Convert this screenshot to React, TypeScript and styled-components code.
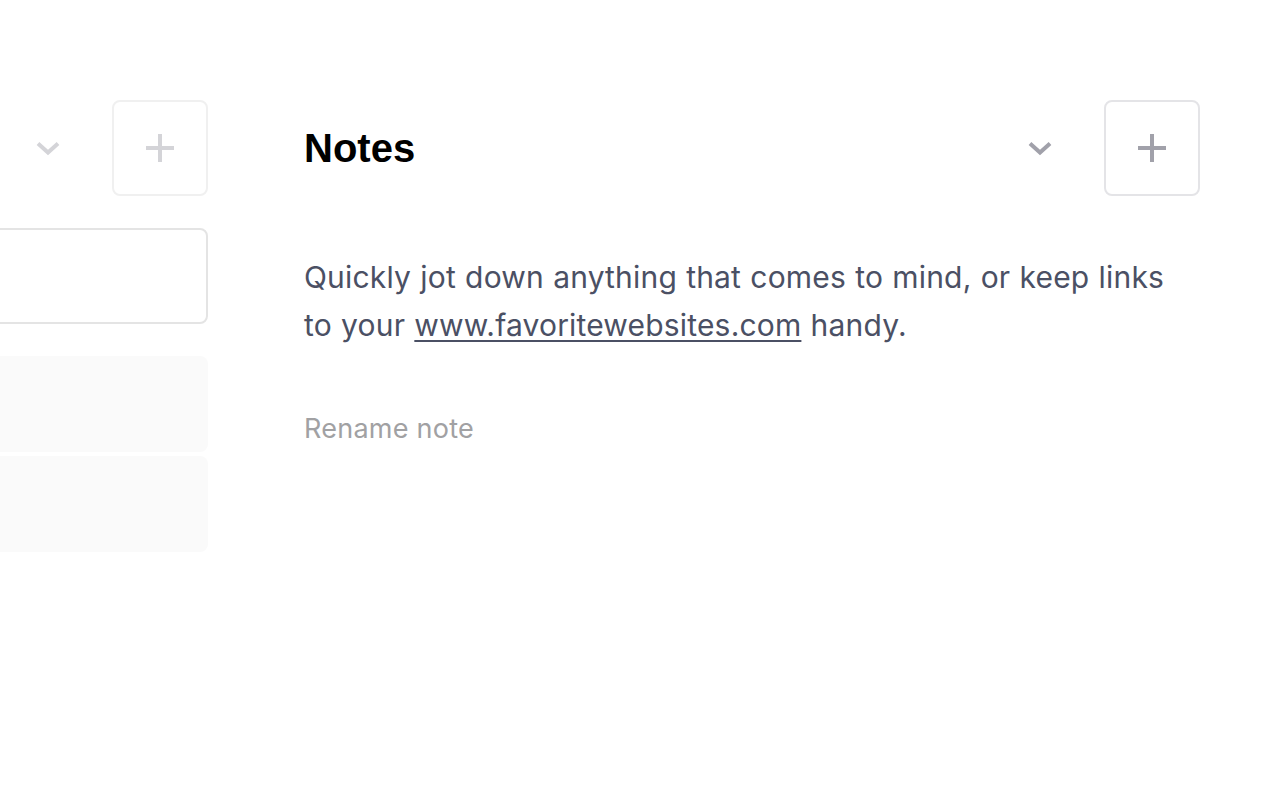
import React from "react";
import styled, { createGlobalStyle } from "styled-components";

const Global = createGlobalStyle`
  html, body { margin: 0; padding: 0; background: #ffffff; }
  body { width: 1280px; height: 800px; overflow: hidden; font-family: Inter, "Noto Sans", sans-serif; }
`;

const Viewport = styled.div`
  width: 1280px;
  height: 800px;
  overflow: hidden;
  padding-top: 100px;
  box-sizing: border-box;
`;

const Track = styled.div<{ $offset: number }>`
  display: flex;
  gap: 96px;
  transform: translateX(${(p) => p.$offset}px);
`;

const Panel = styled.section`
  flex: 0 0 896px;
  width: 896px;
  display: flex;
  flex-direction: column;
`;

const Header = styled.header`
  display: flex;
  align-items: center;
  height: 96px;
`;

const Title = styled.h2`
  flex: 1;
  margin: 0;
  font-family: "Liberation Sans", Arial, sans-serif;
  font-weight: 700;
  font-size: 40px;
  color: #000;
`;

const ChevronButton = styled.button<{ $muted?: boolean }>`
  width: 64px;
  height: 64px;
  border: none;
  background: transparent;
  padding: 0;
  margin-right: 32px;
  display: flex;
  align-items: center;
  justify-content: center;
  color: ${(p) => (p.$muted ? "#d4d4d8" : "#a1a1aa")};
`;

const AddButton = styled.button<{ $muted?: boolean }>`
  width: 96px;
  height: 96px;
  box-sizing: border-box;
  border: 2px solid ${(p) => (p.$muted ? "#f0f0f0" : "#e4e4e7")};
  border-radius: 8px;
  background: #fff;
  padding: 0;
  display: flex;
  align-items: center;
  justify-content: center;
  color: ${(p) => (p.$muted ? "#d4d4d8" : "#a1a1aa")};
`;

const InputBox = styled.div`
  margin-top: 32px;
  height: 96px;
  box-sizing: border-box;
  border: 2px solid #e4e4e4;
  border-radius: 8px;
`;

const RowList = styled.div`
  margin-top: 32px;
  display: flex;
  flex-direction: column;
  gap: 4px;
`;

const Row = styled.div`
  height: 96px;
  border-radius: 8px;
  background: #fafafa;
`;

const Paragraph = styled.p`
  margin: 57px 0 0 0;
  max-width: 880px;
  font-size: 30px;
  line-height: 48px;
  color: #4b5064;
  letter-spacing: 0.18px;
  word-spacing: 0.6px;
`;

const Link = styled.a`
  color: #4b5064;
  text-decoration: underline;
  text-underline-offset: 4px;
  text-decoration-thickness: 2px;
`;

const Rename = styled.button`
  margin: 62px 0 0 0;
  padding: 0;
  align-self: flex-start;
  border: none;
  background: transparent;
  font-family: Inter, sans-serif;
  font-size: 27px;
  line-height: 36px;
  letter-spacing: 0.25px;
  color: #a1a1a3;
`;

const Chevron = () => (
  <svg width="26" height="16" viewBox="0 0 26 16" fill="none">
    <path d="M3 3.5 L13 12.5 L23 3.5" stroke="currentColor" strokeWidth="4" />
  </svg>
);

const Plus = () => (
  <svg width="30" height="30" viewBox="0 0 30 30" fill="none">
    <path d="M15 1 V29 M1 15 H29" stroke="currentColor" strokeWidth="4" />
  </svg>
);

export default function App() {
  return (
    <>
      <Global />
      <Viewport>
        <Track $offset={-688}>
          <Panel>
            <Header>
              <Title aria-hidden="true" />
              <ChevronButton $muted aria-label="Expand">
                <Chevron />
              </ChevronButton>
              <AddButton $muted aria-label="Add">
                <Plus />
              </AddButton>
            </Header>
            <InputBox />
            <RowList>
              <Row />
              <Row />
            </RowList>
          </Panel>
          <Panel>
            <Header>
              <Title>Notes</Title>
              <ChevronButton aria-label="Expand">
                <Chevron />
              </ChevronButton>
              <AddButton aria-label="Add note">
                <Plus />
              </AddButton>
            </Header>
            <Paragraph>
              Quickly jot down anything that comes to mind, or keep links to your{" "}
              <Link href="#">www.favoritewebsites.com</Link> handy.
            </Paragraph>
            <Rename>Rename note</Rename>
          </Panel>
        </Track>
      </Viewport>
    </>
  );
}
